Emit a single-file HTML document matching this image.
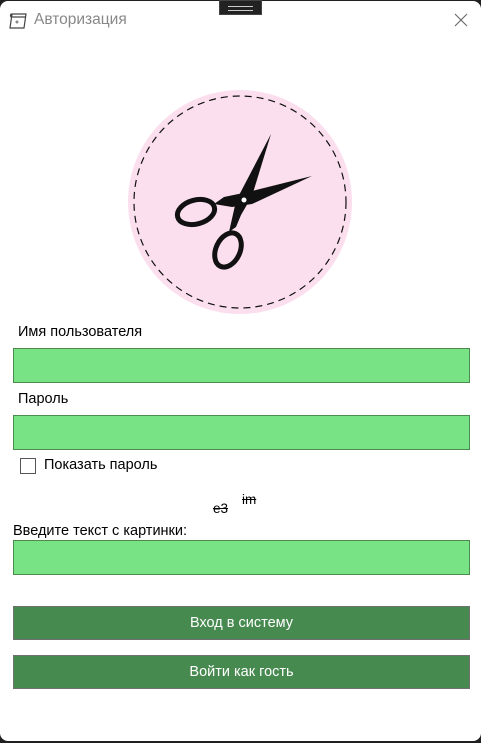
<!DOCTYPE html>
<html><head><meta charset="utf-8"><style>
html,body{margin:0;padding:0;width:481px;height:743px;overflow:hidden;background:#202020;font-family:"Segoe UI","Liberation Sans",sans-serif;}
.win{position:absolute;left:0;top:1px;width:481px;height:740px;background:#fff;border-radius:8px;}
.abs{position:absolute;}
.lbl{position:absolute;font-size:14.5px;color:#000;}
.inp{position:absolute;left:13px;width:455px;height:33px;background:#77e385;border:1px solid #4c8a50;}
.btn{position:absolute;left:13px;width:455px;height:32px;background:#478a50;border:1px solid #707070;color:#fff;font-size:14.5px;text-align:center;line-height:32px;}
</style></head><body>
<div class="win">
<svg class="abs" style="left:9px;top:11px" width="20" height="18" viewBox="0 0 20 18"><path d="M3 2h14l-2 14H1z M3 2c-2 0-2 3 0 3h14" fill="none" stroke="#444" stroke-width="1.2"/><circle cx="8" cy="10" r="1.5" fill="#888"/></svg>
<div class="lbl" style="left:34px;top:10px;font-size:15.5px;color:#888">Авторизация</div>
<svg class="abs" style="left:454px;top:12px" width="14" height="14"><path d="M1 1L13 13M13 1L1 13" stroke="#666" stroke-width="1.1"/></svg>
<div class="abs" style="left:219px;top:-1px;width:43px;height:15px;background:#222;border:1px solid #444;box-sizing:border-box"><div style="margin:5px 8px;height:3px;border-top:1px solid #ccc;border-bottom:1px solid #ccc"></div></div>
<svg class="abs" style="left:0;top:0" width="481" height="330">
<circle cx="240" cy="201" r="112" fill="#fcdfee"/>
<circle cx="240" cy="201" r="106" fill="none" stroke="#111" stroke-width="1.2" stroke-dasharray="7 5"/>
<g fill="#111">
<path d="M271 133 L252 195 L241 214 L236 226 L229 231 L236 200 Z"/>
<path d="M312 175 L252 203 L232 206 L214 203 L224 196 L248 191 Z"/>
</g>
<g fill="none" stroke="#111">
<ellipse cx="196" cy="211" rx="19" ry="12" transform="rotate(-15 196 211)" stroke-width="5"/>
<ellipse cx="228" cy="249" rx="12" ry="18" transform="rotate(25 228 249)" stroke-width="5"/>
</g>
<circle cx="244" cy="199" r="2.5" fill="#fff"/>
</svg>
<div class="lbl" style="left:18px;top:323px">Имя пользователя</div>
<div class="inp" style="top:347px"></div>
<div class="lbl" style="left:18px;top:390px">Пароль</div>
<div class="inp" style="top:414px"></div>
<div class="abs" style="left:20px;top:457px;width:16px;height:16px;border:1px solid #555;box-sizing:border-box"></div>
<div class="lbl" style="left:44px;top:456px">Показать пароль</div>
<div class="lbl" style="left:242px;top:491px;font-size:13.5px;text-decoration:line-through">im</div>
<div class="lbl" style="left:213px;top:500px;font-size:13.5px;text-decoration:line-through">e3</div>
<div class="lbl" style="left:13px;top:522px">Введите текст с картинки:</div>
<div class="inp" style="top:539px"></div>
<div class="btn" style="top:605px">Вход в систему</div>
<div class="btn" style="top:654px">Войти как гость</div>
</div>
</body></html>
